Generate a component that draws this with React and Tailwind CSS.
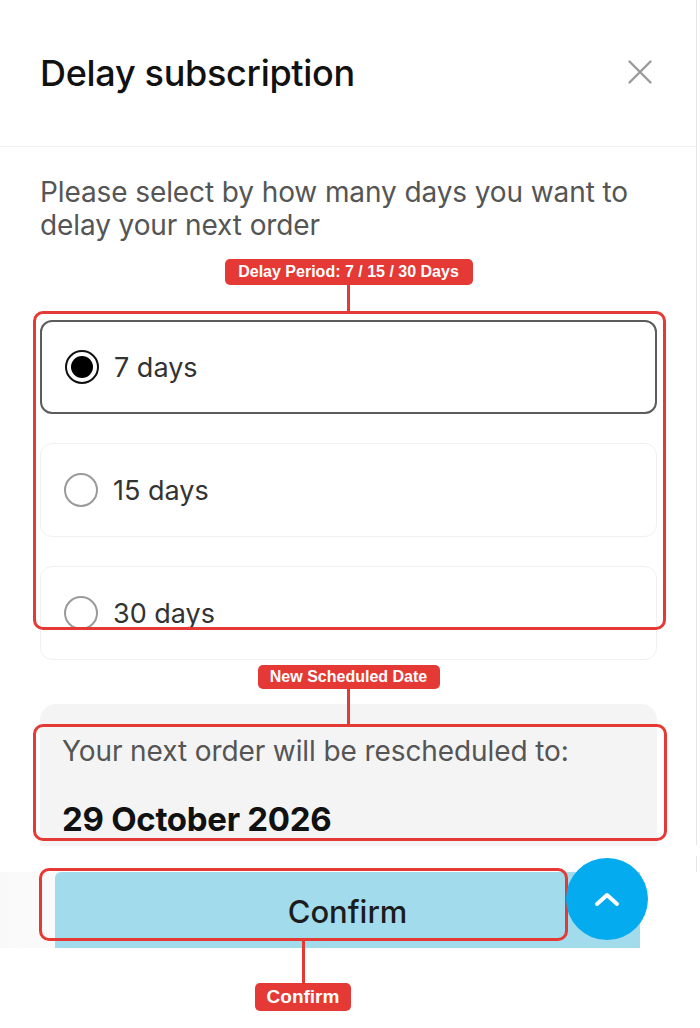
import React from "react";

const ui = { fontFamily: "Inter, 'Noto Sans', sans-serif" };
const ann = { fontFamily: "'Liberation Sans', Arial, sans-serif" };

function Radio({ checked }) {
  if (checked) {
    return (
      <span className="flex h-[34px] w-[34px] shrink-0 items-center justify-center rounded-full border-[2.5px] border-[#111]">
        <span className="h-[22px] w-[22px] rounded-full bg-black" />
      </span>
    );
  }
  return <span className="h-[34px] w-[34px] shrink-0 rounded-full border-[2px] border-[#9a9a9a]" />;
}

function Option({ label, checked }) {
  return (
    <div
      className={
        "flex h-[94px] items-center gap-[15px] rounded-[12px] bg-white pl-[23px] " +
        (checked ? "border-[2px] border-[#5c5c5c]" : "border-[1.5px] border-[#f0f0f0]")
      }
    >
      <Radio checked={checked} />
      <span className="pt-[3px] text-[27px] text-[#333]">{label}</span>
    </div>
  );
}

/* red annotation tag */
function Tag({ children, className }) {
  return (
    <div
      style={ann}
      className={"flex items-center justify-center rounded-[5px] bg-[#e53935] px-[10px] font-bold text-white " + className}
    >
      {children}
    </div>
  );
}

export default function App() {
  return (
    <div className="relative flex h-[1028px] w-[700px] flex-col overflow-hidden bg-white" style={ui}>
      {/* right edge line */}
      <div className="absolute right-[3px] top-0 h-[845px] w-[1px] bg-[#e6e6e6]" />
      <div className="absolute right-[3px] top-[856px] h-[92px] w-[1px] bg-[#e6e6e6]" />

      {/* header */}
      <header className="mr-[4px] flex h-[147px] shrink-0 items-center justify-between border-b border-[#f2f2f2] pl-[40px] pr-[44px]">
        <h1 className="text-[36px] font-medium tracking-[-0.3px] text-[#111]">Delay subscription</h1>
        <svg width="24" height="24" viewBox="0 0 24 24" className="mt-[-2px]">
          <path d="M1.5 1.5 L22.5 22.5 M22.5 1.5 L1.5 22.5" stroke="#9b9b9b" strokeWidth="2.4" strokeLinecap="round" />
        </svg>
      </header>

      {/* body */}
      <div className="flex flex-col pl-[40px] pr-[43px]">
        <p className="pt-[29px] text-[28px] leading-[33px] tracking-[-0.1px] text-[#555]">
          Please select by how many days you want to delay your next order
        </p>

        {/* options + annotation */}
        <div className="relative mt-[78px]">
          <div className="absolute -top-[61px] left-0 right-0 flex flex-col items-center">
            <Tag className="h-[26px] w-[248px] text-[16px]">Delay Period: 7 / 15 / 30 Days</Tag>
            <div className="h-[27px] w-[3px] bg-[#e53935]" />
          </div>
          <div className="absolute -left-[7px] -right-[9px] -top-[9px] h-[319px] rounded-[10px] border-[3px] border-[#e53935]" />
          <div className="flex flex-col gap-[29px]">
            <Option label="7 days" checked />
            <Option label="15 days" />
            <Option label="30 days" />
          </div>
        </div>

        {/* reschedule info + annotation */}
        <div className="relative mt-[44px]">
          <div className="absolute -top-[39px] left-0 right-0 flex flex-col items-center">
            <Tag className="h-[24px] w-[182px] text-[16px]">New Scheduled Date</Tag>
            <div className="h-[36px] w-[3px] bg-[#e53935]" />
          </div>
          <div className="h-[142px] rounded-t-[16px] bg-[#f4f4f4] px-[22px] pt-[30px]">
            <p className="text-[28px] leading-[34px] tracking-[-0.1px] text-[#555]">Your next order will be rescheduled to:</p>
            <p className="mt-[33px] text-[33px] font-bold leading-[36px] tracking-[-0.3px] text-[#111]">29 October 2026</p>
          </div>
          <div className="absolute -left-[7px] -right-[10px] top-[20px] h-[117px] rounded-[10px] border-[3px] border-[#e53935]" />
        </div>
      </div>

      {/* footer */}
      <div className="relative mt-[26px] flex h-[76px] bg-gradient-to-r from-[#f9f9f9] via-white to-white pl-[55px]">
        <button className="flex h-[76px] w-[585px] items-center justify-center rounded-tl-[6px] bg-[#a2dcec] pt-[4px] text-[31px] font-medium text-[#1c1c1c]">
          Confirm
        </button>
        <div className="absolute left-[39px] top-[-4px] h-[73px] w-[529px] rounded-[10px] border-[3px] border-[#e53935]" />
        <div className="absolute left-[255px] top-[68px] flex flex-col items-center">
          <div className="h-[43px] w-[3px] bg-[#e53935]" />
          <Tag className="h-[28px] w-[96px] text-[19px]">Confirm</Tag>
        </div>
        {/* floating up button */}
        <div className="absolute left-[566px] top-[-14px] flex h-[82px] w-[82px] items-center justify-center rounded-full bg-[#05abef]">
          <svg width="30" height="18" viewBox="0 0 30 18">
            <path d="M5 14 L15 5 L25 14" fill="none" stroke="white" strokeWidth="4" strokeLinecap="round" strokeLinejoin="round" />
          </svg>
        </div>
      </div>
    </div>
  );
}
